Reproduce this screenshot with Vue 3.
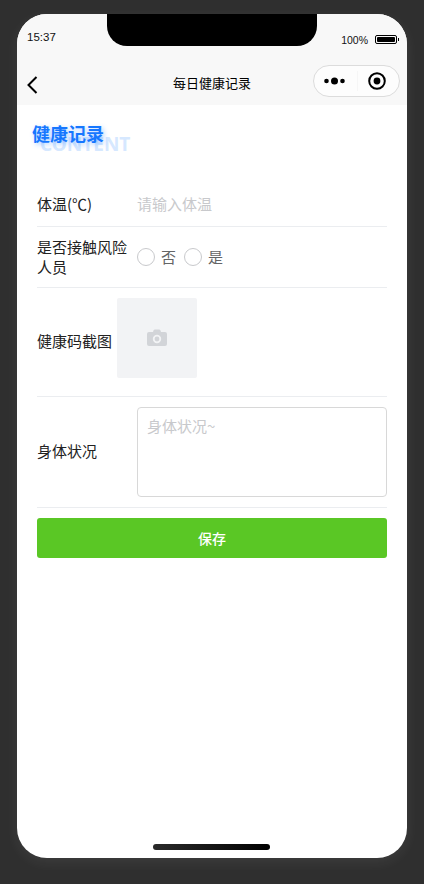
<script setup>
const options = ['否', '是']
</script>

<template>
  <div class="stage">
    <div class="phone">
      <div class="notch"></div>
      <header class="head">
        <div class="status">
          <span class="time">15:37</span>
          <div class="battery-wrap">
            <span class="pct">100%</span>
            <span class="battery"><i></i></span>
          </div>
        </div>
        <div class="nav">
          <svg class="back" width="12" height="18" viewBox="0 0 12 18">
            <path d="M10.5 1 L2.5 9 L10.5 17" fill="none" stroke="#000" stroke-width="2" />
          </svg>
          <span class="nav-title">每日健康记录</span>
          <div class="capsule">
            <svg width="24" height="10" viewBox="0 0 24 10">
              <circle cx="3.5" cy="5" r="2.3" fill="#000" />
              <circle cx="11.5" cy="5" r="3.5" fill="#000" />
              <circle cx="19.5" cy="5" r="2.3" fill="#000" />
            </svg>
            <span class="cap-line"></span>
            <svg width="18" height="18" viewBox="0 0 18 18">
              <circle cx="9" cy="9" r="7.8" fill="none" stroke="#000" stroke-width="2" />
              <circle cx="9" cy="9" r="3.4" fill="#000" />
            </svg>
          </div>
        </div>
      </header>

      <main class="body">
        <div class="title-box">
          <span class="title-bg">CONTENT</span>
          <span class="title">健康记录</span>
        </div>

        <section class="form">
          <div class="row row-temp">
            <label class="label">体温(℃)</label>
            <span class="placeholder">请输入体温</span>
          </div>
          <div class="row row-risk">
            <label class="label">是否接触风险人员</label>
            <div class="radios">
              <div v-for="o in options" :key="o" class="radio">
                <span class="circle"></span>
                <span class="radio-text">{{ o }}</span>
              </div>
            </div>
          </div>
          <div class="row row-photo">
            <label class="label label-auto">健康码截图</label>
            <div class="upload">
              <svg width="22" height="18" viewBox="0 0 22 18">
                <path
                  fill="#d2d4d8"
                  fill-rule="evenodd"
                  d="M7.5 1.5 Q7.8 .5 9 .5 H13 Q14.2 .5 14.5 1.5 L15 3 H19 Q21 3 21 5 V15 Q21 17 19 17 H3 Q1 17 1 15 V5 Q1 3 3 3 H7 Z M11 5.8 A4.2 4.2 0 1 0 11 14.2 A4.2 4.2 0 1 0 11 5.8 Z M11 7.6 A2.4 2.4 0 1 1 11 12.4 A2.4 2.4 0 1 1 11 7.6 Z"
                />
              </svg>
            </div>
          </div>
          <div class="row row-text">
            <label class="label">身体状况</label>
            <div class="textarea"><span class="placeholder">身体状况~</span></div>
          </div>
        </section>

        <button class="save">保存</button>
      </main>

      <div class="home-bar"></div>
    </div>
  </div>
</template>

<style>
html, body { margin: 0; padding: 0; background: #333; }
</style>

<style scoped>
* { box-sizing: border-box; }
.stage {
  width: 424px;
  height: 884px;
  background: #2f2f2f;
  padding: 14px 17px 0;
  font-family: "Noto Sans CJK SC", "Noto Sans", sans-serif;
  overflow: hidden;
}
.phone {
  position: relative;
  width: 390px;
  height: 844px;
  background: #fff;
  border-radius: 30px;
  overflow: hidden;
  display: flex;
  flex-direction: column;
  box-shadow: 0 4px 14px rgba(255, 255, 255, .07);
}
.notch {
  position: absolute;
  top: 0;
  left: 90px;
  width: 210px;
  height: 32px;
  background: #000;
  border-radius: 0 0 20px 20px;
}
.head { background: #f8f8f8; height: 91px; display: flex; flex-direction: column; }
.status {
  height: 42px;
  display: flex;
  justify-content: space-between;
  align-items: flex-start;
  padding: 0 9px 0 10px;
  color: #111;
}
.time { font: 11.5px/16px "Liberation Sans", Arial, sans-serif; margin-top: 15px; }
.battery-wrap { display: flex; align-items: center; gap: 7px; margin-top: 19px; }
.pct { font: 10.5px/14px "Liberation Sans", Arial, sans-serif; }
.battery {
  position: relative;
  width: 22px;
  height: 9px;
  border: 1px solid #000;
  border-radius: 2px;
  padding: 1px;
  display: flex;
  margin: -2px 1px 0 0;
}
.battery i { display: block; flex: 1; background: #000; border-radius: 1px; }
.battery::after {
  content: "";
  position: absolute;
  right: -3px;
  top: 2px;
  width: 1.5px;
  height: 3px;
  background: #000;
}
.nav {
  flex: 1;
  position: relative;
  display: flex;
  align-items: center;
  justify-content: space-between;
  padding: 1px 7px 0 9px;
}
.back { display: block; margin-top: 8px; }
.nav-title {
  position: absolute;
  left: 0;
  right: 0;
  top: 17px;
  text-align: center;
  font-size: 13px;
  line-height: 20px;
  color: #000;
}
.capsule {
  width: 87px;
  height: 32px;
  border: 1px solid #dcdcdc;
  border-radius: 16px;
  background: #fdfdfd;
  display: flex;
  align-items: center;
  padding: 0 13px 0 9px;
  justify-content: space-between;
}
.cap-line { width: 1px; height: 20px; background: #f6f6f6; }
.body { flex: 1; padding: 0 20px; display: flex; flex-direction: column; }
.title-box { position: relative; height: 78px; }
.title {
  position: absolute;
  left: -5px;
  top: 15px;
  font-size: 18px;
  font-weight: 700;
  line-height: 26px;
  color: #1677ff;
  text-shadow: 2px 2px 5px rgba(22, 119, 255, .35);
}
.title-bg {
  position: absolute;
  left: 3px;
  top: 27px;
  font: 700 19px/24px "Noto Sans", sans-serif;
  color: #d6e8ff;
}
.form { display: flex; flex-direction: column; }
.row {
  display: flex;
  align-items: center;
  border-bottom: 1px solid #ebedf0;
  font-size: 15px;
  color: #323233;
}
.row-temp { height: 44px; padding-bottom: 2px; }
.row-risk { height: 61px; }
.row-photo { height: 109px; }
.row-text { height: 111px; }
.label { width: 100px; flex: none; line-height: 20px; color: #222; padding-right: 8px; }
.row-text .label { margin-top: -2px; }
.label-auto { width: 80px; padding-right: 0; margin-top: -2px; }
.placeholder { color: #c8c9cc; font-size: 15px; line-height: 20px; }
.radios { display: flex; align-items: center; gap: 8px; }
.radio { display: flex; align-items: center; gap: 6px; }
.circle { width: 18px; height: 18px; border: 1px solid #c8c9cc; border-radius: 50%; background: #fff; }
.radio-text { color: #646566; font-size: 15px; line-height: 20px; }
.upload {
  width: 80px;
  height: 80px;
  background: #f2f3f5;
  border-radius: 2px;
  display: flex;
  align-items: center;
  justify-content: center;
  align-self: flex-start;
  margin-top: 10px;
}
.textarea {
  flex: 1;
  height: 90px;
  border: 1px solid #d8d8d8;
  border-radius: 4px;
  padding: 8px 9px;
  line-height: 20px;
}
.save {
  margin-top: 10px;
  width: 100%;
  height: 40px;
  border: none;
  border-radius: 3px;
  background: #5ac725;
  color: #fff;
  font: 500 14px/20px "Noto Sans CJK SC", sans-serif;
  padding: 0;
}
.home-bar {
  position: absolute;
  left: 136px;
  bottom: 8px;
  width: 117px;
  height: 6px;
  border-radius: 3px;
  background: linear-gradient(90deg, #2a2a2a, #000);
}
</style>
